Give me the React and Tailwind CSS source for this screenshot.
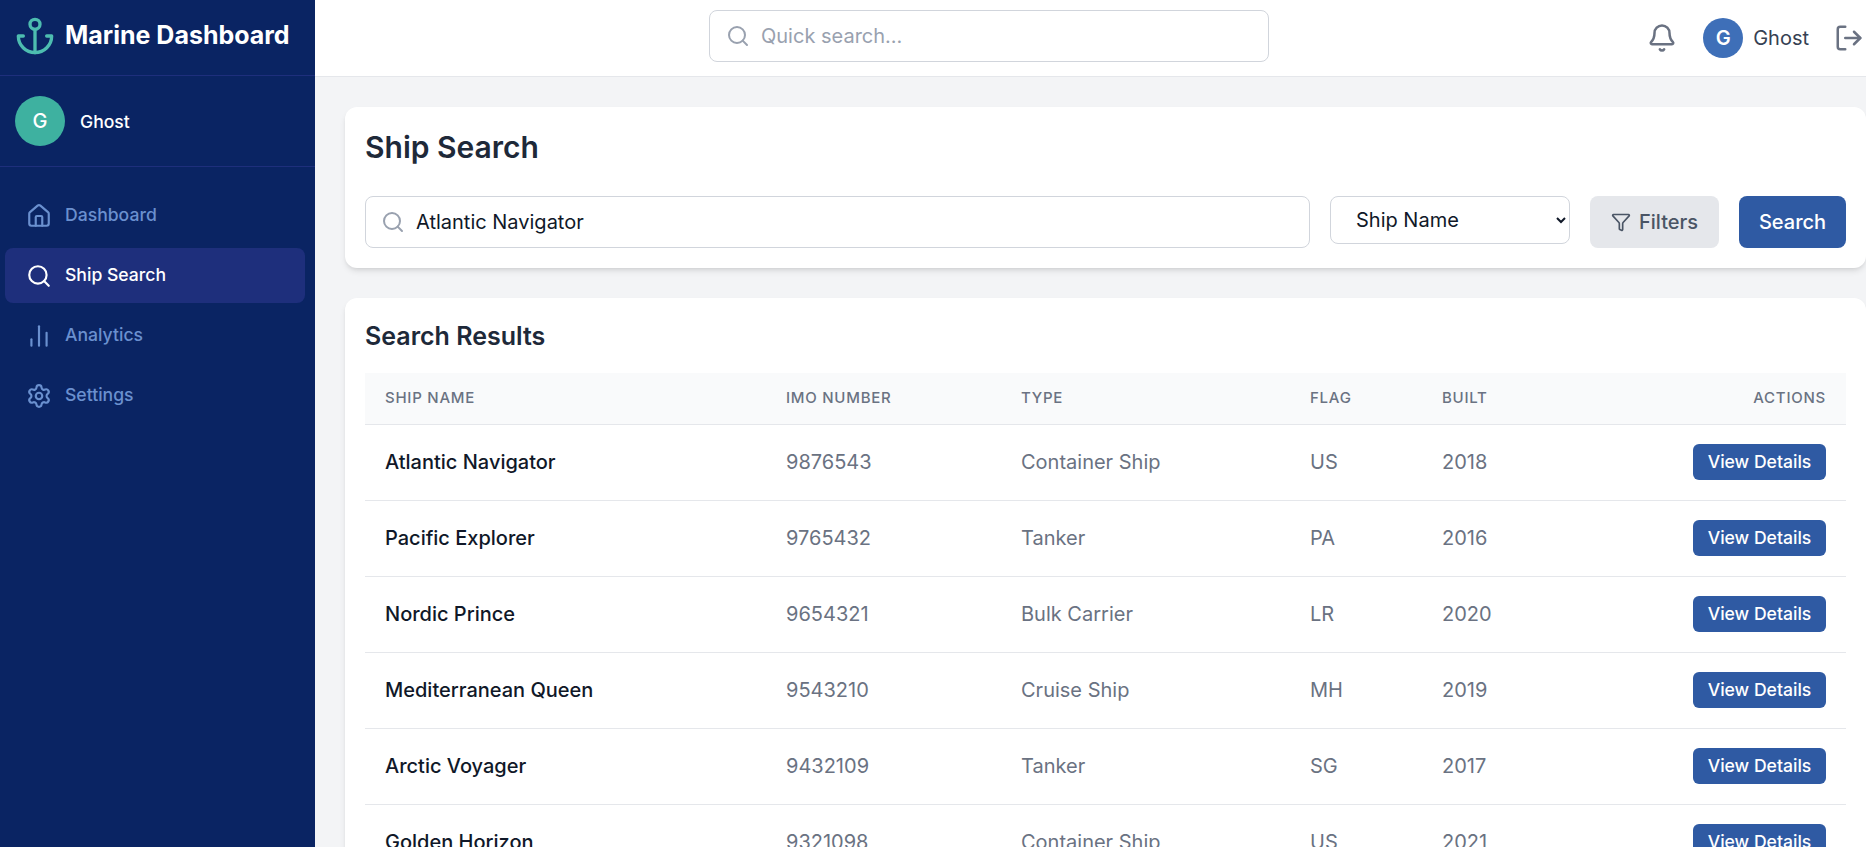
import { House, Search, ChartNoAxesColumn, Settings, Bell, LogOut, Funnel } from "lucide-react";

const NAV_ITEMS = [
  { label: "Dashboard", icon: House },
  { label: "Ship Search", icon: Search, active: true },
  { label: "Analytics", icon: ChartNoAxesColumn },
  { label: "Settings", icon: Settings },
];

const SHIPS = [
  { name: "Atlantic Navigator", imo: "9876543", type: "Container Ship", flag: "US", built: "2018" },
  { name: "Pacific Explorer", imo: "9765432", type: "Tanker", flag: "PA", built: "2016" },
  { name: "Nordic Prince", imo: "9654321", type: "Bulk Carrier", flag: "LR", built: "2020" },
  { name: "Mediterranean Queen", imo: "9543210", type: "Cruise Ship", flag: "MH", built: "2019" },
  { name: "Arctic Voyager", imo: "9432109", type: "Tanker", flag: "SG", built: "2017" },
  { name: "Golden Horizon", imo: "9321098", type: "Container Ship", flag: "US", built: "2021" },
];

function AnchorLogo() {
  return (
    <svg width="40" height="40" viewBox="0 0 24 24" fill="none" stroke="#4dbdb0" strokeWidth="2" strokeLinecap="round" strokeLinejoin="round" className="shrink-0">
      <circle cx="12" cy="5" r="3" />
      <path d="M12 22V8" />
      <path d="M5 12H2a10 10 0 0 0 20 0h-3" />
    </svg>
  );
}

function Sidebar() {
  return (
    <aside className="w-[315px] shrink-0 h-full bg-[#0a2463] flex flex-col">
      <div className="h-[76px] shrink-0 flex items-center gap-[10px] pl-[15px] pb-[4px] border-b border-[#1e2f7c]">
        <AnchorLogo />
        <span className="text-[25px] font-bold text-white">Marine Dashboard</span>
      </div>
      <div className="h-[91px] shrink-0 flex items-center gap-[15px] pl-[15px] border-b border-[#1e2f7c]">
        <div className="w-[50px] h-[50px] rounded-full bg-[#3eb1a0] text-white flex items-center justify-center text-xl font-medium">G</div>
        <span className="mt-[2px] text-[17.6px] font-medium text-white">Ghost</span>
      </div>
      <nav className="flex flex-col gap-[5px] px-[5px] pt-[21px]">
        {NAV_ITEMS.map((item) => {
          const Icon = item.icon;
          return (
            <div
              key={item.label}
              className={`h-[55px] w-[300px] flex items-center gap-[13px] pl-[21px] rounded-lg text-[17.6px] font-medium ${
                item.active ? "bg-[#1e2f7c] text-white" : "text-[#6a90cf]"
              }`}
            >
              <Icon size={26} strokeWidth={2} />
              <span>{item.label}</span>
            </div>
          );
        })}
      </nav>
    </aside>
  );
}

function Topbar() {
  return (
    <header className="h-[77px] shrink-0 bg-white border-b border-gray-200 flex items-center pl-[394px] pr-[2px]">
      <div className="w-[560px] h-[52px] -mt-[4px] border border-gray-300 rounded-lg flex items-center gap-[11px] pl-4">
        <Search size={24} strokeWidth={2} className="text-gray-400 shrink-0" />
        <input
          readOnly
          placeholder="Quick search..."
          className="flex-1 min-w-0 outline-none text-xl placeholder:text-gray-400"
        />
      </div>
      <div className="ml-auto flex items-center -mt-[1px]">
        <Bell size={30} strokeWidth={2} className="text-gray-500" />
        <div className="w-10 h-10 ml-[26px] rounded-full bg-[#3e6fb8] text-white flex items-center justify-center text-xl font-semibold">G</div>
        <span className="ml-[10px] text-xl text-gray-700">Ghost</span>
        <LogOut size={30} strokeWidth={2} className="ml-[25px] text-gray-500" />
      </div>
    </header>
  );
}

function SearchCard() {
  return (
    <section className="bg-white rounded-xl shadow-md px-5 pt-5 h-[161px]">
      <h1 className="text-[30px] leading-[40px] font-semibold text-gray-800">Ship Search</h1>
      <div className="flex items-start gap-5 mt-[29px]">
        <div className="flex-1 h-[52px] border border-gray-300 rounded-lg flex items-center gap-[11px] pl-[15px]">
          <Search size={24} strokeWidth={2} className="text-gray-400 shrink-0" />
          <input
            readOnly
            value="Atlantic Navigator"
            className="flex-1 min-w-0 outline-none text-xl text-gray-900"
          />
        </div>
        <select className="w-[240px] h-[48px] pl-[21px] pr-2 border border-gray-300 rounded-lg bg-white text-xl text-gray-900 outline-none">
          <option>Ship Name</option>
        </select>
        <button className="w-[129px] h-[52px] rounded-lg bg-gray-200 text-gray-600 text-xl font-medium flex items-center justify-center gap-2">
          <Funnel size={20} strokeWidth={2} />
          Filters
        </button>
        <button className="w-[107px] h-[52px] rounded-lg bg-[#2f5aa3] text-white text-xl font-medium">Search</button>
      </div>
    </section>
  );
}

function ResultsCard() {
  return (
    <section className="bg-white rounded-xl shadow-md mt-[30px] px-5 pt-5 pb-5">
      <h2 className="text-[25px] leading-[36px] font-semibold text-gray-800">Search Results</h2>
      <table className="w-full mt-[19px] table-fixed border-collapse">
        <colgroup>
          <col className="w-[401px]" />
          <col className="w-[235px]" />
          <col className="w-[289px]" />
          <col className="w-[132px]" />
          <col />
          <col />
        </colgroup>
        <thead>
          <tr className="h-[51px] bg-gray-50 border-b border-gray-200 text-left text-[15px] font-medium tracking-wider text-gray-500">
            <th className="pl-5 font-medium">SHIP NAME</th>
            <th className="pl-5 font-medium">IMO NUMBER</th>
            <th className="pl-5 font-medium">TYPE</th>
            <th className="pl-5 font-medium">FLAG</th>
            <th className="pl-5 font-medium">BUILT</th>
            <th className="pr-5 font-medium text-right">ACTIONS</th>
          </tr>
        </thead>
        <tbody>
          {SHIPS.map((ship) => (
            <tr key={ship.imo} className="h-[76px] border-b border-gray-200 text-xl text-gray-500">
              <td className="pl-5 font-medium text-gray-900 whitespace-nowrap">{ship.name}</td>
              <td className="pl-5">{ship.imo}</td>
              <td className="pl-5">{ship.type}</td>
              <td className="pl-5">{ship.flag}</td>
              <td className="pl-5">{ship.built}</td>
              <td className="pr-5 text-right">
                <button className="w-[133px] h-[36px] rounded-md bg-[#2f5aa3] text-white text-[17.6px] font-medium">View Details</button>
              </td>
            </tr>
          ))}
        </tbody>
      </table>
    </section>
  );
}

export default function App() {
  return (
    <div className="h-screen flex overflow-hidden bg-gray-100 font-['Inter',sans-serif]">
      <Sidebar />
      <div className="flex-1 min-w-0 h-full flex flex-col">
        <Topbar />
        <main className="flex-1 min-h-0 overflow-hidden pl-[30px] pt-[30px]">
          <SearchCard />
          <ResultsCard />
        </main>
      </div>
    </div>
  );
}
